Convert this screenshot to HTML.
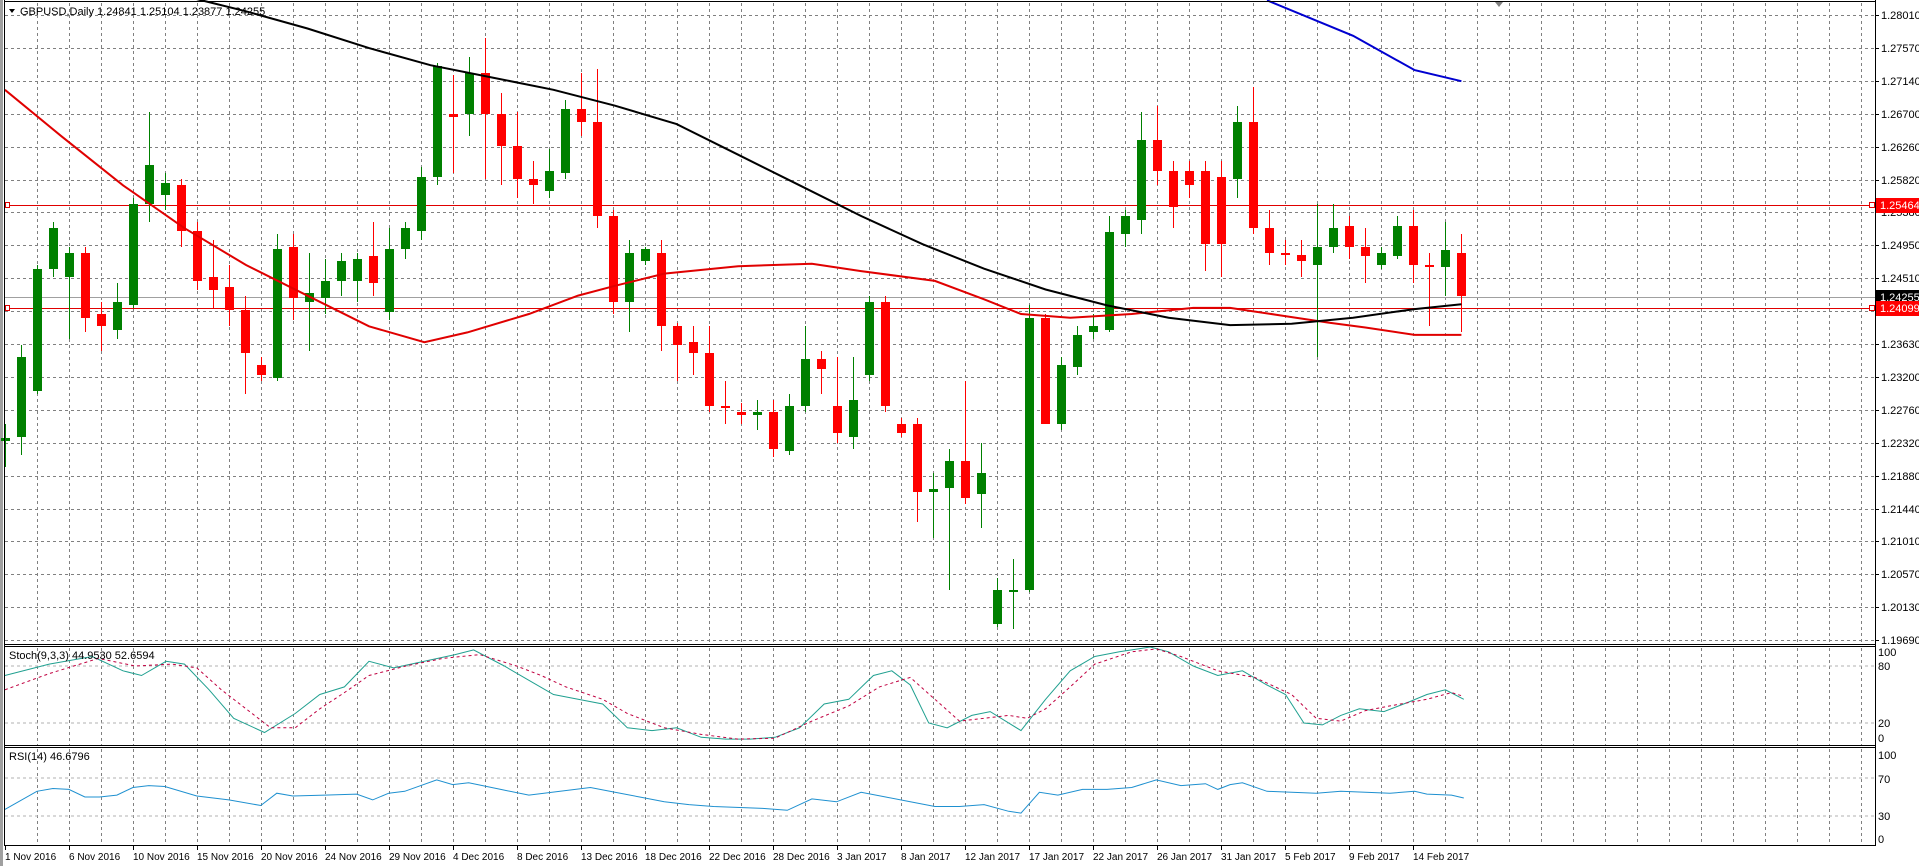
<!DOCTYPE html>
<html><head><meta charset="utf-8"><style>
html,body{margin:0;padding:0;background:#fff;width:1919px;height:866px;overflow:hidden}
svg{display:block}
text{font-family:"Liberation Sans",sans-serif;font-size:11px;fill:#000}
text.d{font-size:10px}
</style></head><body>
<svg id="s" width="1919" height="866" xmlns="http://www.w3.org/2000/svg">
<rect x="0" y="0" width="1919" height="866" fill="#fff"/>
<rect x="0" y="0" width="3" height="866" fill="#a0a0a0"/>
<g id="grid"></g>
<g id="plot"></g>
<g id="axis"></g>
</svg>
<script>
var NS="http://www.w3.org/2000/svg";
function el(p,t,a,txt){var e=document.createElementNS(NS,t);for(var k in a)e.setAttribute(k,a[k]);if(txt!=null)e.textContent=txt;document.getElementById(p).appendChild(e);return e;}
function Y(d){return 15+(d-11)*1.2255;}
function X(d){return d*1.2301;}
for(var x=37;x<=1862;x+=32){
 el('grid','line',{x1:x+.5,y1:3,x2:x+.5,y2:644,stroke:'#808080','stroke-dasharray':'3,3'});
 el('grid','line',{x1:x+.5,y1:648,x2:x+.5,y2:745,stroke:'#808080','stroke-dasharray':'3,3'});
 el('grid','line',{x1:x+.5,y1:749,x2:x+.5,y2:845,stroke:'#808080','stroke-dasharray':'3,3'});
}
var labels=["1.28010","1.27570","1.27140","1.26700","1.26260","1.25820","1.25380","1.24950","1.24510","1.24070","1.23630","1.23200","1.22760","1.22320","1.21880","1.21440","1.21010","1.20570","1.20130","1.19690"];
for(var k=0;k<20;k++){var y=Math.round(15+32.9*k);
 el('grid','line',{x1:5,y1:y+.5,x2:1875,y2:y+.5,stroke:'#808080','stroke-dasharray':'3,3'});
 el('axis','line',{x1:1875,y1:y+.5,x2:1879,y2:y+.5,stroke:'#000'});
 el('axis','text',{x:1881,y:y+4},labels[k]);}
function sy(v){return 742-v*0.95;} function ry(v){return 844.5-v*0.95;}
[80,20].forEach(function(v){el('grid','line',{x1:5,y1:sy(v),x2:1875,y2:sy(v),stroke:'#b0b0b0','stroke-dasharray':'3,3'});});
[70,30].forEach(function(v){el('grid','line',{x1:5,y1:ry(v),x2:1875,y2:ry(v),stroke:'#b0b0b0','stroke-dasharray':'3,3'});});
el('axis','line',{x1:4.5,y1:0,x2:4.5,y2:846,stroke:'#000'});
el('axis','line',{x1:4,y1:1.5,x2:1876,y2:1.5,stroke:'#000'});
el('axis','rect',{x:4,y:644,width:1872,height:3,fill:'#000'});
el('axis','rect',{x:5,y:645,width:1870,height:1,fill:'#fff'});
el('axis','rect',{x:4,y:745,width:1872,height:3,fill:'#000'});
el('axis','rect',{x:5,y:746,width:1870,height:1,fill:'#fff'});
el('axis','line',{x1:4,y1:845.5,x2:1876,y2:845.5,stroke:'#000'});
el('axis','line',{x1:1875.5,y1:0,x2:1875.5,y2:846,stroke:'#000'});
el('plot','line',{x1:5,y1:297.5,x2:1875,y2:297.5,stroke:'#a0a0a0'});
el('plot','line',{x1:5,y1:205.5,x2:1875,y2:205.5,stroke:'#e00000'});
el('plot','line',{x1:5,y1:308.5,x2:1875,y2:308.5,stroke:'#e00000'});
el('plot','rect',{x:1869.5,y:202.5,width:5,height:5,fill:'#fff',stroke:'#e00000'});
el('plot','rect',{x:1869.5,y:305.5,width:5,height:5,fill:'#fff',stroke:'#e00000'});
el('plot','rect',{x:5.5,y:202.5,width:4,height:5,fill:'#fff',stroke:'#e00000'});
el('plot','rect',{x:5.5,y:305.5,width:4,height:5,fill:'#fff',stroke:'#e00000'});
var C=[[356,359,345,380,1],[290,355,280,370,1],[218,318,215,320,1],[185,218,180,225,1],[205,225,200,275,1],[205,258,200,270,0],[255,265,245,285,0],[245,268,230,275,1],[165,248,160,250,1],[133,165,90,180,1],[148,158,140,170,1],[150,187,145,200,0],[187,228,180,235,0],[225,235,195,250,0],[233,252,215,265,0],[252,287,240,320,0],[297,305,290,310,0],[202,307,190,310,1],[200,242,190,260,0],[238,245,205,285,1],[228,242,210,255,1],[212,228,205,240,1],[210,228,205,245,1],[208,230,180,240,0],[202,253,185,260,1],[185,202,180,210,1],[143,187,135,195,1],[53,143,50,150,1],[92,94,60,140,0],[58,92,45,110,1],[58,92,30,145,0],[92,118,75,150,0],[118,145,90,160,0],[145,150,130,165,0],[138,155,120,160,1],[88,140,80,145,1],[88,98,58,110,0],[98,175,55,185,0],[175,245,170,255,0],[205,245,195,270,1],[202,212,200,215,1],[205,265,195,285,0],[265,280,262,310,0],[278,287,265,305,0],[287,330,265,335,0],[330,332,310,345,0],[335,337,328,345,0],[335,337,325,350,1],[335,365,325,372,0],[330,367,320,370,1],[292,330,265,335,1],[292,300,285,320,0],[330,352,290,360,0],[325,355,290,365,1],[245,305,240,310,1],[245,330,240,335,0],[345,352,340,355,0],[345,400,340,425,0],[398,400,385,438,1],[375,397,365,480,1],[375,405,310,410,0],[385,402,360,430,1],[480,508,470,510,1],[480,482,455,512,1],[258,480,248,482,1],[258,345,255,345,0],[297,345,290,350,1],[272,298,265,305,1],[265,270,255,275,1],[188,268,175,270,1],[175,190,170,200,1],[113,178,90,190,1],[113,138,85,150,0],[138,168,130,185,0],[138,150,130,160,0],[138,198,130,220,0],[143,198,130,225,0],[98,145,85,160,1],[98,185,70,190,0],[185,205,170,215,0],[205,207,195,215,0],[207,212,195,225,0],[200,215,165,290,1],[185,200,165,205,1],[183,200,175,210,0],[200,208,185,230,0],[205,215,200,218,1],[183,208,175,210,1],[183,215,170,230,0],[215,217,205,265,0],[203,217,180,240,1],[205,240,190,270,0]];
C.forEach(function(c,i){var x=5+16*i;var col=c[4]?'#008000':'#ff0000';
 var t=Math.round(Y(c[0])),b=Math.round(Y(c[1])),h=Math.round(Y(c[2])),l=Math.round(Y(c[3]));
 el('plot','line',{x1:x+.5,y1:h,x2:x+.5,y2:l,stroke:col});
 var bh=Math.max(1,b-t);
 el('plot','rect',{x:x-4,y:t,width:9,height:bh,fill:col});
});
function poly(pts,fx,fy,attrs){var s=pts.map(function(p){return fx(p[0]).toFixed(1)+','+fy(p[1]).toFixed(1);}).join(' ');attrs.points=s;attrs.fill='none';el('plot','polyline',attrs);}
poly([[4,72],[50,110],[100,150],[150,185],[200,215],[260,245],[300,265],[345,278],[380,270],[430,255],[470,240],[500,232],[540,222],[600,216],[660,214],[700,220],[760,228],[800,243],[830,255],[870,258],[920,255],[970,250],[1000,250],[1040,256],[1080,262],[1110,266],[1150,272],[1188,272]],X,Y,{stroke:'#e00000','stroke-width':2});
poly([[160,-2],[200,8],[250,22],[300,38],[350,52],[400,62],[450,72],[500,85],[550,100],[600,125],[650,150],[700,175],[750,198],[800,218],[850,235],[900,248],[950,258],[1000,264],[1050,263],[1100,258],[1150,251],[1188,247]],X,Y,{stroke:'#000','stroke-width':2});
poly([[1030,-1],[1100,28],[1150,56],[1188,65]],X,Y,{stroke:'#0000d0','stroke-width':2});
poly([[4,70],[40,82],[75,90],[100,75],[115,70],[135,85],[150,82],[170,55],[190,25],[215,10],[240,30],[260,50],[280,58],[300,85],[320,78],[345,85],[370,92],[385,97],[410,80],[430,65],[450,50],[470,45],[490,40],[510,15],[530,12],[550,15],[570,5],[590,3],[610,3],[630,5],[650,15],[670,40],[690,45],[710,70],[725,75],[740,60],[755,20],[770,15],[790,28],[805,32],[830,12],[850,45],[870,75],[890,90],[910,95],[935,100],[950,95],[970,80],[990,70],[1010,75],[1030,60],[1045,50],[1060,20],[1075,18],[1090,28],[1105,35],[1125,32],[1145,42],[1160,50],[1175,55],[1190,45]],X,sy,{stroke:'#20a090'});
poly([[4,55],[40,72],[80,88],[110,80],[140,82],[160,78],[180,55],[200,35],[220,15],[240,15],[260,35],[280,52],[300,70],[330,80],[360,88],[390,92],[420,80],[440,70],[460,58],[490,45],[510,30],[540,15],[570,8],[600,3],[630,4],[660,22],[690,38],[715,58],[740,68],[760,45],[780,22],[800,25],[820,28],[835,25],[850,35],[870,58],[890,82],[920,95],[940,98],[960,90],[990,75],[1020,68],[1050,50],[1070,25],[1090,22],[1110,33],[1130,38],[1160,45],[1180,52],[1190,48]],X,sy,{stroke:'#c00040','stroke-dasharray':'3,3'});
poly([[4,37],[30,56],[43,59],[56,58],[69,50],[81,50],[95,52],[108,60],[121,62],[134,61],[160,51],[186,47],[212,41],[225,54],[238,51],[264,52],[290,53],[303,47],[316,54],[329,56],[355,68],[368,63],[381,65],[407,58],[430,52],[480,60],[500,55],[520,50],[540,45],[560,42],[580,40],[620,38],[640,36],[660,48],[680,45],[700,55],[720,50],[740,45],[760,40],[780,40],[800,42],[820,35],[830,33],[845,55],[860,52],[880,58],[900,58],[920,60],[940,68],[960,62],[980,64],[990,58],[1000,63],[1010,65],[1030,56],[1050,55],[1070,54],[1090,56],[1110,55],[1130,54],[1150,56],[1160,53],[1180,52],[1190,49]],X,ry,{stroke:'#1e90d0'});
el('axis','rect',{x:1876,y:198,width:43,height:15,fill:'#ff0000'});
el('axis','text',{x:1880,y:209,style:'fill:#fff'},'1.25464');
el('axis','rect',{x:1876,y:290,width:43,height:15,fill:'#000'});
el('axis','text',{x:1880,y:301,style:'fill:#fff'},'1.24255');
el('axis','rect',{x:1876,y:301,width:43,height:15,fill:'#ff0000'});
el('axis','text',{x:1880,y:312,style:'fill:#fff'},'1.24099');
[['100',656],['80',670],['20',727],['0',742]].forEach(function(a){el('axis','text',{x:1878,y:a[1]},a[0]);});
[['100',759],['70',783],['30',820],['0',843]].forEach(function(a){el('axis','text',{x:1878,y:a[1]},a[0]);});
el('axis','text',{x:9,y:659},'Stoch(9,3,3) 44.9530 52.6594');
el('axis','text',{x:9,y:760},'RSI(14) 46.6796');
el('axis','text',{x:20,y:15},'GBPUSD,Daily  1.24841 1.25104 1.23877 1.24255');
el('axis','path',{d:'M9 9 L15 9 L12 13 Z',fill:'#000'});
el('axis','path',{d:'M1495 2 L1503 2 L1499 7 Z',fill:'#808080'});
var D=["1 Nov 2016","6 Nov 2016","10 Nov 2016","15 Nov 2016","20 Nov 2016","24 Nov 2016","29 Nov 2016","4 Dec 2016","8 Dec 2016","13 Dec 2016","18 Dec 2016","22 Dec 2016","28 Dec 2016","3 Jan 2017","8 Jan 2017","12 Jan 2017","17 Jan 2017","22 Jan 2017","26 Jan 2017","31 Jan 2017","5 Feb 2017","9 Feb 2017","14 Feb 2017"];
D.forEach(function(t,k){var x=5+64*k;el('axis','line',{x1:x+.5,y1:846,x2:x+.5,y2:850,stroke:'#000'});el('axis','text',{x:x,y:860,'class':'d'},t);});
</script>
</body></html>
